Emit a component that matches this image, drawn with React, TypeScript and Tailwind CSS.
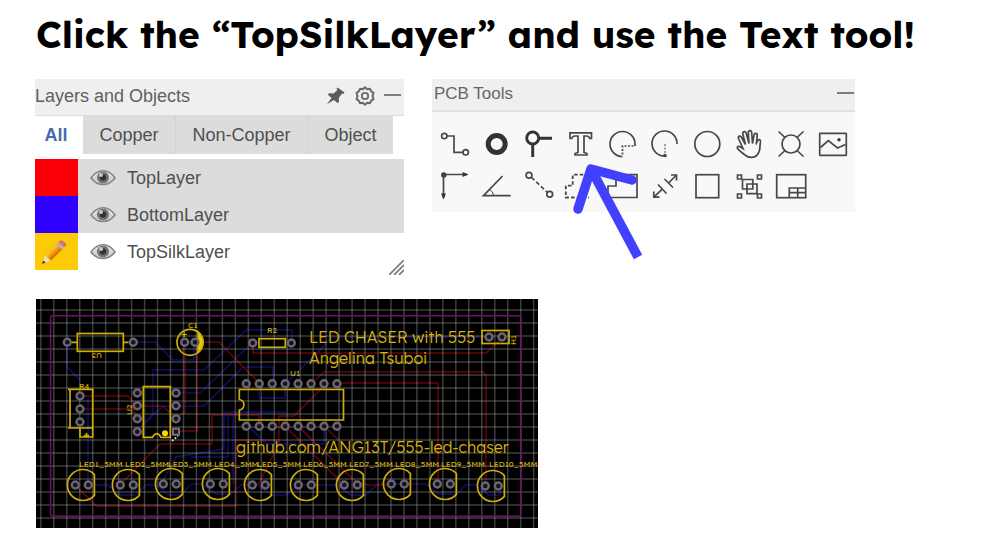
import type { ReactNode } from "react";

const tabs = ["All", "Copper", "Non-Copper", "Object"];

const layers = [
  { name: "TopLayer", swatch: "bg-[#fa0006]", row: "bg-[#dcdcdc]" },
  { name: "BottomLayer", swatch: "bg-[#3000ff]", row: "bg-[#dcdcdc]" },
  { name: "TopSilkLayer", swatch: "bg-[#fccb05]", row: "bg-white", active: true },
];

function PinIcon() {
  return (
    <svg viewBox="0 0 20 20" className="size-5" fill="#5c5c5c" aria-hidden="true">
      <path d="M11.5 1.5 18.5 6.5 17.5 8 16 7.6 12.8 12 13 16 11.5 17 7.8 14 1 18.3 5.5 12 1.8 8.6 3 7.2 7.6 7.4 11.4 3.9 10.6 2.6Z" />
    </svg>
  );
}

function GearIcon() {
  return (
    <svg viewBox="0 0 20 20" className="size-5" fill="none" stroke="#686868" aria-hidden="true">
      <path
        strokeWidth="2"
        strokeLinejoin="round"
        d="M10 1.2 12.2 3.2 15 2.8 16 5.2 18.5 6.8 17.5 10 18.5 13.2 16 14.8 15 17.2 12.2 16.8 10 18.8 7.8 16.8 5 17.2 4 14.8 1.5 13.2 2.5 10 1.5 6.8 4 5.2 5 2.8 7.8 3.2Z"
      />
      <circle cx="10" cy="10" r="3.2" strokeWidth="1.8" />
    </svg>
  );
}

function MinimizeIcon() {
  return (
    <svg viewBox="0 0 18 20" className="h-5 w-[18px]" fill="none" stroke="#7d7d7d" strokeWidth="2" aria-hidden="true">
      <path d="M0 9H17" />
    </svg>
  );
}

function EyeIcon() {
  return (
    <svg viewBox="0 0 26 18" className="h-[18px] w-[26px]" fill="none" aria-hidden="true">
      <path d="M1 9Q6 2 13 1.8T25 9Q20 15.5 13 15.5T1 9Z" fill="#d4d4d4" stroke="#858585" strokeWidth="1.6" />
      <path d="M3 8.5Q8 3 13 3t10 5.5" stroke="#f0f0f0" strokeWidth="1" />
      <circle cx="13" cy="8.5" r="6" fill="#747474" />
      <circle cx="13" cy="8.5" r="3.2" fill="#333" />
      <circle cx="11" cy="6" r="2" fill="#c9c9c9" />
    </svg>
  );
}

function PencilIcon() {
  return (
    <svg viewBox="0 0 28 28" className="size-7" aria-hidden="true">
      <path d="M2 26 5 17 11 22Z" fill="#f2dfb0" />
      <path d="M2 26 3.2 22.5 5.5 24.5Z" fill="#333" />
      <path d="M5 17 17 5.5 23 10.5 11 22.5Z" fill="#f5980c" />
      <path d="M5 17 17 5.5 19 7.2 7 19Z" fill="#ffbd2e" />
      <path d="M9 21 21 9 23 10.5 11 22.5Z" fill="#d97706" />
      <path d="M16 6.4 18.3 4.2 24.3 9.2 22 11.5Z" fill="#b9aeb0" />
      <path d="M18.3 4.2 20 2.5Q21.5 1.8 22.7 2.8L26 5.5Q26.7 6.8 26 7.6L24.3 9.2Z" fill="#d9706c" />
    </svg>
  );
}

function LayersPanel() {
  return (
    <section className="relative w-full max-w-[369px] pb-[5px] text-lg text-[#4f4f4f]">
      <header className="flex h-[37px] items-center border-b border-[#ddd] bg-[#efefef] pb-0.5">
        <h2 className="flex-1 text-[#606060]">Layers and Objects</h2>
        <div className="flex items-center gap-[9px] pr-0.5">
          <button type="button" aria-label="Pin">
            <PinIcon />
          </button>
          <button type="button" aria-label="Settings">
            <GearIcon />
          </button>
          <button type="button" aria-label="Minimize">
            <MinimizeIcon />
          </button>
        </div>
      </header>
      <div className="mr-[11px] flex h-[38px]" role="tablist">
        {tabs.map((tab, i) => (
          <button
            key={tab}
            type="button"
            role="tab"
            aria-selected={i === 0}
            className={
              i === 0
                ? "w-12 pr-1.5 text-center font-bold text-[#4a69ad]"
                : "flex-auto border-r border-[#d2d2d2] bg-[#dcdcdc] px-[15px] last:border-r-0"
            }
          >
            {tab}
          </button>
        ))}
      </div>
      <ul className="mt-[5px]">
        {layers.map((layer) => (
          <li key={layer.name} className={`flex h-[37px] items-center ${layer.row}`}>
            <span className={`flex h-full w-[43px] items-center justify-center pr-1.5 ${layer.swatch}`}>
              {layer.active && <PencilIcon />}
            </span>
            <button type="button" className="ml-3" aria-label={`Toggle ${layer.name}`}>
              <EyeIcon />
            </button>
            <span className="ml-[11px]">{layer.name}</span>
          </li>
        ))}
      </ul>
      <svg viewBox="0 0 15 15" className="absolute right-0 bottom-0 size-[15px]" stroke="#808080" strokeWidth="1.8" aria-hidden="true">
        <path d="M0 15 15 0M5 15 15 5M10 15 15 10" />
      </svg>
    </section>
  );
}

const tools: { name: string; icon: ReactNode }[] = [
  {
    name: "Track",
    icon: (
      <>
        <circle cx="5.3" cy="8" r="2.7" />
        <circle cx="26.7" cy="24.3" r="2.7" />
        <path d="M8 8H15V24.3H24" />
      </>
    ),
  },
  { name: "Pad", icon: <circle cx="15.7" cy="16" r="8.5" stroke="#333" strokeWidth="5" /> },
  {
    name: "Via",
    icon: (
      <g stroke="#333" strokeWidth="2.9">
        <circle cx="9.7" cy="10" r="6" />
        <path d="M16 10.3H29M9.7 16V29" />
      </g>
    ),
  },
  {
    name: "Text",
    icon: <path d="M5 4.8H26.5V10.5H24.8Q24 8 21.5 8H19V24.5L22 25.5V27H10V25.5L13 24.5V8H10Q7.5 8 6.7 10.5H5Z" />,
  },
  {
    name: "Arc",
    icon: (
      <>
        <path d="M28 16A12.5 12.5 0 1 0 15.5 28.5" />
        <path d="M28 16V18H15.5V28" strokeDasharray="2 1.5" />
      </>
    ),
  },
  {
    name: "Arc by Center",
    icon: (
      <>
        <path d="M28 16A12.5 12.5 0 1 0 16 28" />
        <path d="M16 16V27" strokeDasharray="2 1.5" strokeWidth="1" />
        <circle cx="16" cy="27.5" r="1" fill="#444" />
      </>
    ),
  },
  { name: "Circle", icon: <circle cx="16.3" cy="16" r="12.5" /> },
  {
    name: "Move",
    icon: (
      <>
        <path d="M12 27C9.5 25 6 22.5 4.6 20.5C3.5 18.5 5.5 17.7 7.2 18.8L10 20.5L5.5 10.5C4.8 8 7.5 7 8.6 9.5L12.5 16.5L9.8 6C9.5 3.3 12.5 2.7 13.2 5.2L16 15.5L15.3 5C15.3 2 18.5 2 18.7 4.7L19.5 15.5L21 7C21.5 4.5 24.5 5 24.2 7.6L23.5 14.5" />
        <path d="M23 16.5C24 12.5 25.5 10.8 27 11.8C28.3 12.8 27 15 27 18C27 22 26.5 24 24.5 26.5C21.5 30.5 15.5 30 12 27" />
      </>
    ),
  },
  {
    name: "Hole",
    icon: (
      <>
        <circle cx="16" cy="16" r="9" />
        <path d="M3.5 3.5 10 9.5M28.5 3.5 22 9.5M3.5 28.5 10 22.5M28.5 28.5 22 22.5" />
      </>
    ),
  },
  {
    name: "Image",
    icon: (
      <>
        <rect x="2.7" y="5.3" width="26.6" height="22" rx=".5" />
        <path d="M3.5 19.5 11.3 12.7 20.5 20 28.5 16.5" />
        <circle cx="22" cy="11.7" r="1.7" fill="#333" stroke="none" />
      </>
    ),
  },
  {
    name: "Canvas Origin",
    icon: (
      <>
        <circle cx="4.8" cy="5" r="2.7" fill="#333" stroke="none" />
        <path d="M4.5 28V4.5H28" />
        <path d="M23.5 2 29.5 4.5 23.5 7ZM2 23.5 4.5 29.5 7 23.5Z" fill="#333" stroke="none" />
      </>
    ),
  },
  {
    name: "Protractor",
    icon: (
      <>
        <path d="M21.5 6 2.5 25.7H29.7" />
        <path d="M8.5 19.5Q12.5 21.5 12.5 25.5" strokeWidth="1" />
      </>
    ),
  },
  {
    name: "Connect",
    icon: (
      <>
        <circle cx="6" cy="5.3" r="2.9" />
        <circle cx="26.7" cy="24.3" r="2.9" />
        <path d="M8.5 7.5 24.5 22.5" strokeDasharray="4 2.5" />
      </>
    ),
  },
  {
    name: "Copper Area",
    icon: <path d="M24 4.7H7.7V15.7H.8V27.5H24" strokeDasharray="3.5 2.2" strokeWidth="1.8" />,
  },
  { name: "Solid Region", icon: <path d="M1 16H9V4.7H30V27.5H1Z" /> },
  {
    name: "Dimension",
    icon: (
      <>
        <path d="M4.8 27.2 13.5 18.8M19.5 13 27.5 5M9 14.5 17.5 23.5M15.5 9 24 17.5" />
        <path d="M4.8 21.5V27.2H10.5M22 5H27.5V10.5" />
      </>
    ),
  },
  { name: "Rectangle", icon: <rect x="5" y="4.7" width="22.7" height="23" /> },
  {
    name: "Group",
    icon: (
      <>
        <path d="M4.5 5h4v4h-4ZM24.5 5h4v4h-4ZM4.5 24h4v4h-4ZM24.5 24h4v4h-4Z" />
        <path d="M9.5 9.5H19.8V19H9.5ZM14 14H24V23.7H14Z" />
      </>
    ),
  },
  {
    name: "Panelize",
    icon: (
      <>
        <rect x="1.7" y="4.7" width="29" height="23" />
        <path d="M14.3 27.5V18H30.5M14.3 22.7H30.5M22.7 18V27.5" />
      </>
    ),
  },
];

function ToolsPanel() {
  return (
    <section className="relative w-full max-w-[423px] self-start bg-[#f8f8f8] pb-[5px]">
      <header className="flex h-[33px] items-center border-b-2 border-[#e1e1e1] bg-[#efefef] pb-[2px]">
        <h2 className="flex-1 pl-[2px] text-[17px] text-[#666]">PCB Tools</h2>
        <button type="button" aria-label="Minimize">
          <MinimizeIcon />
        </button>
      </header>
      <div className="grid grid-cols-10 pt-[11px] pr-px pl-[2px]">
        {tools.map((tool) => (
          <button key={tool.name} type="button" title={tool.name} aria-label={tool.name} className="flex h-[42px] items-center justify-center">
            <svg viewBox="0 0 32 32" className="size-8 overflow-visible" fill="none" stroke="#484848" strokeWidth="1.7" aria-hidden="true">
              {tool.icon}
            </svg>
          </button>
        ))}
      </div>
      {/* Arrow pointing at the Text tool */}
      <svg viewBox="0 0 80 110" className="pointer-events-none absolute top-[79px] left-[135px] h-[110px] w-20" fill="none" stroke="#4141fd" strokeWidth="9.5" aria-hidden="true">
        <path d="M11 51 24 11 65 22" strokeLinecap="round" strokeLinejoin="round" />
        <path d="M24 11 71 99" />
      </svg>
    </section>
  );
}

const leds = [
  { x: 31, y: 186, labelX: 43 },
  { x: 76, y: 186, labelX: 89 },
  { x: 119, y: 185, labelX: 132 },
  { x: 166, y: 185, labelX: 178 },
  { x: 208, y: 186, labelX: 221 },
  { x: 254, y: 186, labelX: 267 },
  { x: 300, y: 186, labelX: 313 },
  { x: 347, y: 185, labelX: 359 },
  { x: 393, y: 185, labelX: 405 },
  { x: 441, y: 187, labelX: 453 },
];

const pads = [
  [31.3, 43.3], [97.3, 43.3],
  [148.7, 43.3], [159, 43.3],
  [44, 97], [44, 110], [44, 123],
  [101.3, 94], [101.3, 106.7], [101.3, 119.7], [101.3, 132.7],
  [140, 94], [140, 106.7], [140, 119.7],
  [216.7, 44], [255.3, 44],
  [453, 38], [466, 38],
];

function Pad({ x, y }: { x: number; y: number }) {
  return <circle cx={x} cy={y} r="3.5" fill="#17131d" stroke="#6b6572" strokeWidth="2.4" />;
}

function Board() {
  const columns = Array.from({ length: 39 }, (_, i) => 4.8 + i * 12.97);
  const rows = Array.from({ length: 17 }, (_, i) => 11 + i * 13);
  const chipPins = Array.from({ length: 8 }, (_, i) => 210.3 + i * 12.95);

  return (
    <svg viewBox="0 0 502 229" className="w-full max-w-[502px] bg-black" fill="none" role="img" aria-label="LED chaser board layout">
      {/* Bottom copper */}
      <g stroke="#100e68" strokeWidth="1.5">
        <path d="M31 43V68L44 81M97 43H119L137 61H158V44M52 98V186" />
        <path d="M101 132 117 115V71H168L210 31H256V43M140 94H164L214 46M101 132 127 107H168L207 68H237V85" />
        <path d="M223 85V99H249V85L285 50 296 38H450" />
        <path d="M188 113V150L140 158 125 185M192 113V158H155M197 185V118L202 113H250M213 127 230 145H288V127M188 113H202M262 127 282 147" />
        <path d="M58 186H72L84 196H100L110 186H120L132 196H145L155 185H165L180 195H195L205 186H222L235 196H250L262 186H300L315 196H330L342 185H390L402 195H420L430 186H440L452 196H464V187" />
      </g>

      {/* Top copper */}
      <g stroke="#62060b" strokeWidth="1.5">
        <path d="M44 97H92L101 107H127L140 119M44 110H97L101 119M149 43V113L140 119M161 43V132H140" />
        <path d="M165 43H183L223 84M217 44V54H450L466 39M275 85 288 73H447L450 76V186M301 84H402V185" />
        <path d="M223 127V116H176V145H124L84 186M39 186 60 207H200V141H243M243 145V117H258L290 85" />
        <path d="M249 127 308 186M262 127 320 183 332 186H355M243 145 222 186M288 127 310 148" />
      </g>

      <g stroke="#aaa" strokeOpacity="0.36" strokeWidth="1.5">
        {columns.map((x) => (
          <path key={x} d={`M${x} 0V229`} />
        ))}
        {rows.map((y) => (
          <path key={y} d={`M0 ${y}H502`} />
        ))}
      </g>

      <rect x="14.7" y="16.7" width="470.3" height="200.6" rx="2" stroke="#6d0f70" strokeWidth="1.5" />

      {/* Silkscreen outlines */}
      <g stroke="#cfad07" strokeWidth="1.7">
        <rect x="41.3" y="34.5" width="46" height="17.8" />
        <path d="M36 43.3H41M87 43.3H92.5" />
        <circle cx="154" cy="43.3" r="13" />
        <path d="M162 33A13 13 0 0 1 162 53.6Z" fill="#edc904" />
        <path d="M145.5 35.5H151M148.3 33V38" strokeWidth="1.2" />
        <path d="M32 90.3H56.7V129H32M34 90.3V129M44 129V138H56.7V129M48 136.5H53M50.5 134V138" />
        <path d="M107.3 87.7H134.3V138.3H125Q120.7 131 116.5 138.3H107.3Z" />
        <rect x="223" y="39.7" width="26.3" height="8.6" />
        <path d="M203.3 90.5H307.5V121H203.3V111A5.3 5.3 0 0 0 203.3 100.5Z" />
        <rect x="446" y="31.5" width="27" height="13" />
        {leds.map((led) => (
          <path
            key={led.x}
            d={`M${led.x + 27.4} ${led.y - 10.4}A15.5 15.5 0 1 0 ${led.x + 27.4} ${led.y + 10.4}Z`}
            strokeLinejoin="round"
          />
        ))}
      </g>
      <circle cx="129" cy="134.3" r="3" fill="#ffd900" />

      {/* Pads */}
      {pads.map(([x, y]) => (
        <Pad key={`${x}-${y}`} x={x} y={y} />
      ))}
      {chipPins.map((x) => (
        <g key={x}>
          <Pad x={x} y={84.7} />
          <Pad x={x} y={127.3} />
        </g>
      ))}
      {leds.map((led) => (
        <g key={led.x}>
          <Pad x={led.x + 8.3} y={led.y} />
          <Pad x={led.x + 21.3} y={led.y} />
        </g>
      ))}
      <rect x="137" y="129.7" width="6" height="6" fill="#17131d" stroke="#77717f" strokeWidth="2" />
      <path d="M136 142 142 137" stroke="#c8c8c8" strokeWidth="1.8" strokeDasharray="2 1.5" />

      {/* Silkscreen text */}
      <g fill="#cdab0a" className="font-['Lexend','Inter',sans-serif] text-[8px]">
        <text x="152" y="29">C1</text>
        <text x="43" y="90">R4</text>
        <text x="231" y="34">R2</text>
        <text x="254" y="77">U1</text>
        <text transform="translate(66 54) rotate(180)">U3</text>
        <text transform="translate(96 116) rotate(-90)">U2</text>
        <text transform="translate(480 46) rotate(-90)">H1</text>
        {leds.map((led, i) => (
          <text key={led.x} x={led.labelX} y="168">{`LED${i + 1}_5MM`}</text>
        ))}
      </g>
      <g fill="#d6b30a" className="font-['Lexend','Inter',sans-serif] text-[16px] font-light">
        <text x="273" y="44">LED CHASER with 555</text>
        <text x="273" y="65">Angelina Tsuboi</text>
        <text x="200" y="154">github.com/ANG13T/555-led-chaser</text>
      </g>
    </svg>
  );
}

export default function App() {
  return (
    <main className="min-h-screen bg-white px-[36px] pt-[10px] pb-5 font-['Liberation_Sans',Arial,sans-serif]">
      <h1 className="font-['Lexend','Inter',sans-serif] text-[37px] leading-[48px] font-bold text-black">
        Click the “TopSilkLayer” and use the Text tool!
      </h1>
      <div className="mt-[21px] -ml-px flex gap-7">
        <LayersPanel />
        <ToolsPanel />
      </div>
      <div className="mt-6">
        <Board />
      </div>
    </main>
  );
}
